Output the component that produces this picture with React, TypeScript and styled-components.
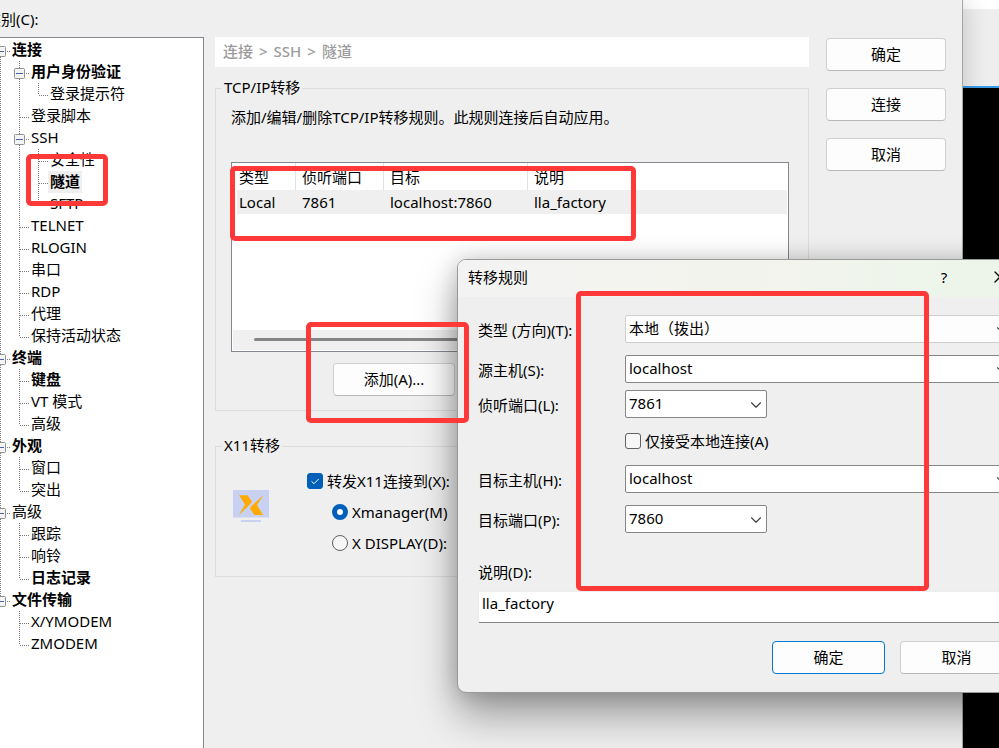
import React from "react";
import styled, { createGlobalStyle, css } from "styled-components";
import { ChevronDown, X } from "lucide-react";

const GlobalStyle = createGlobalStyle`
  * { box-sizing: border-box; }
  body {
    margin: 0;
    overflow: hidden;
    color: #000;
    font: 15px/20px "Noto Sans", "Noto Sans CJK SC", sans-serif;
  }
  button, input, select { font: inherit; color: inherit; }
`;

/* ---------- Desktop ---------- */

const Desktop = styled.div`
  position: relative;
  display: flex;
  min-height: 100vh;
  overflow: hidden;
  background: #efefef;
`;

const SettingsWindow = styled.main`
  position: relative;
  flex: 1;
  display: flex;
  padding-right: 16px;
  background: #efefef;
  border-right: 1px solid #a6a6a6;
  box-shadow: 0 0 24px rgba(0, 0, 0, 0.2);
`;

const Terminal = styled.aside`
  width: 36px;
  display: flex;
  flex-direction: column;
  background: #000;
`;

const TerminalTitle = styled.div`
  height: 9px;
  background: #fff;
`;

const TerminalTools = styled.div`
  height: 79px;
  background: #eee;
  border-bottom: 2px solid #3a9be8;
`;

/* ---------- Category tree ---------- */

const Sidebar = styled.nav`
  display: flex;
  flex-direction: column;
  width: 218px;
  margin-left: -14px;
`;

const SidebarLabel = styled.div`
  padding: 9px 0 8px;
`;

const Tree = styled.ul`
  flex: 1;
  margin: 0;
  padding: 1px 0 0 4px;
  list-style: none;
  background: #fff;
  border: 1px solid #828790;
  border-bottom: 0;
`;

const TreeRow = styled.li`
  display: flex;
  height: 22px;
`;

const TreeItem = styled.button<{ $bold: boolean; $selected: boolean }>`
  height: 22px;
  margin: 0;
  padding: 0 2px 2px;
  border: 0;
  line-height: 20px;
  white-space: nowrap;
  font-weight: ${(p) => (p.$bold ? 700 : 400)};
  background: ${(p) => (p.$selected ? "#efefef" : "transparent")};
`;

const GuideSvg = styled.svg`
  display: block;
  flex: none;
`;

type GuideKind = "none" | "line" | "tee" | "elbow" | "open" | "openFirst" | "openLast";

function Guide({ kind }: { kind: GuideKind }) {
  const open = kind.startsWith("open");
  const up = ["line", "tee", "elbow", "open", "openLast"].includes(kind);
  const down = ["line", "tee", "open", "openFirst"].includes(kind);
  const side = kind !== "none" && kind !== "line";
  return (
    <GuideSvg width="19" height="22" viewBox="0 0 19 22" aria-hidden="true">
      <g stroke="#7a7a7a" strokeDasharray="1 1">
        {up && <path d="M9.5 0V12" />}
        {down && <path d="M9.5 12V22" />}
        {side && <path d="M10 12.5H19" />}
      </g>
      {open && (
        <>
          <rect x="4.5" y="7.5" width="10" height="10" rx="1" fill="#f4f4f4" stroke="#919191" />
          <path d="M6 12.5H13" stroke="#4b63a7" />
        </>
      )}
    </GuideSvg>
  );
}

interface Node {
  text: string;
  guides: GuideKind[];
  bold?: boolean;
  selected?: boolean;
}

const nodes: Node[] = [
  { text: "连接", guides: ["openFirst"], bold: true },
  { text: "用户身份验证", guides: ["line", "open"], bold: true },
  { text: "登录提示符", guides: ["line", "line", "elbow"] },
  { text: "登录脚本", guides: ["line", "tee"] },
  { text: "SSH", guides: ["line", "open"] },
  { text: "安全性", guides: ["line", "line", "tee"] },
  { text: "隧道", guides: ["line", "line", "tee"], bold: true, selected: true },
  { text: "SFTP", guides: ["line", "line", "elbow"] },
  { text: "TELNET", guides: ["line", "tee"] },
  { text: "RLOGIN", guides: ["line", "tee"] },
  { text: "串口", guides: ["line", "tee"] },
  { text: "RDP", guides: ["line", "tee"] },
  { text: "代理", guides: ["line", "tee"] },
  { text: "保持活动状态", guides: ["line", "elbow"] },
  { text: "终端", guides: ["open"], bold: true },
  { text: "键盘", guides: ["line", "tee"], bold: true },
  { text: "VT 模式", guides: ["line", "tee"] },
  { text: "高级", guides: ["line", "elbow"] },
  { text: "外观", guides: ["open"], bold: true },
  { text: "窗口", guides: ["line", "tee"] },
  { text: "突出", guides: ["line", "elbow"] },
  { text: "高级", guides: ["open"] },
  { text: "跟踪", guides: ["line", "tee"] },
  { text: "响铃", guides: ["line", "tee"] },
  { text: "日志记录", guides: ["line", "elbow"], bold: true },
  { text: "文件传输", guides: ["openLast"], bold: true },
  { text: "X/YMODEM", guides: ["none", "tee"] },
  { text: "ZMODEM", guides: ["none", "elbow"] },
];

/* ---------- Settings content ---------- */

const Content = styled.section`
  flex: 1;
  min-width: 0;
  margin: 37px 17px 0 11px;
`;

const Breadcrumb = styled.div`
  display: flex;
  gap: 6px;
  height: 30px;
  margin-bottom: 11px;
  padding-left: 8px;
  line-height: 29px;
  font-weight: 500;
  color: #9c9c9c;
  background: #fff;
`;

const Group = styled.fieldset`
  min-width: 0;
  margin: 0 0 25px;
  padding: 0 19px 14px 15px;
  border: 1px solid #dcdcdc;
`;

const GroupTitle = styled.legend`
  margin-left: -9px;
  padding: 0 2px 2px;
  line-height: 18px;
`;

const Description = styled.p`
  margin: 9px 0 35px;
`;

const buttonBase = css`
  height: 33px;
  padding: 0 0 2px;
  background: #fdfdfd;
  border: 1px solid #d0d0d0;
  border-bottom-color: #b9b9b9;
  border-radius: 4px;
`;

const Button = styled.button<{ $primary?: boolean; $width: number }>`
  ${buttonBase}
  width: ${(p) => p.$width}px;
  ${(p) => p.$primary && "border-color: #0078d4;"}
`;

const ListBox = styled.div`
  display: flex;
  flex-direction: column;
  height: 190px;
  padding: 0 1px 1px;
  background: #fff;
  border: 1px solid #828790;
`;

const ListBody = styled.div`
  flex: 1;
  padding: 0 0 0 4px;
`;

const RuleTable = styled.table`
  width: 100%;
  table-layout: fixed;
  border-collapse: separate;
  border-spacing: 0;
  text-align: left;
`;

const Th = styled.th<{ $width?: number }>`
  width: ${(p) => (p.$width ? `${p.$width}px` : "auto")};
  height: 27px;
  padding: 0 0 0 6px;
  font-weight: 400;
  border-right: ${(p) => (p.$width ? "1px solid #e2e2e2" : "0")};
  &:first-child { padding-left: 2px; }
`;

const Td = styled.td`
  height: 24px;
  padding: 0 0 0 6px;
  background: #efefef;
  &:first-child { padding-left: 2px; }
`;

const ScrollTrack = styled.div`
  display: flex;
  align-items: center;
  height: 20px;
  padding: 0 60px 2px 21px;
  background: #f0f0f0;
`;

const ScrollThumb = styled.div`
  flex: 1;
  height: 3px;
  border-radius: 2px;
  background: #858585;
`;

const ListActions = styled.div`
  margin: 11px 0 0 102px;
`;

const ForwardLayout = styled.div`
  display: flex;
  padding: 15px 0 9px 2px;
`;

const ForwardIcon = styled.svg`
  flex: none;
  margin: 19px 38px 0 0;
`;

const Options = styled.div`
  display: flex;
  flex-direction: column;
  gap: 11px;
`;

const Option = styled.label<{ $indent?: boolean }>`
  display: flex;
  align-items: center;
  gap: 4px;
  margin-left: ${(p) => (p.$indent ? 25 : 0)}px;
`;

const CheckWrap = styled.span`
  position: relative;
  display: flex;
`;

const CheckMark = styled.svg`
  position: absolute;
  inset: 0;
  pointer-events: none;
`;

const CheckBox = styled.input`
  appearance: none;
  width: 16px;
  height: 16px;
  margin: 0;
  background: #f6f6f6;
  border: 1px solid #606060;
  border-radius: 3px;
  &:checked {
    background: #005fb8;
    border-color: #005fb8;
  }
`;

const RadioButton = styled.input`
  appearance: none;
  width: 16px;
  height: 16px;
  margin: 0;
  background: #f6f6f6;
  border: 1px solid #606060;
  border-radius: 50%;
  &:checked {
    background: #fff;
    border: 5px solid #005fb8;
  }
`;

const SideActions = styled.div`
  display: flex;
  flex-direction: column;
  gap: 17px;
  padding-top: 38px;
`;

/* ---------- Rule dialog ---------- */

const Dialog = styled.div`
  position: absolute;
  top: 259px;
  left: 457px;
  right: -35px;
  overflow: hidden;
  background: #efefef;
  border: 1px solid #999;
  border-radius: 9px;
  box-shadow: 0 22px 40px rgba(0, 0, 0, 0.36), 0 0 22px rgba(0, 0, 0, 0.18);
`;

const TitleBar = styled.header`
  display: flex;
  align-items: center;
  height: 37px;
  padding: 0 5px 3px 10px;
  background: linear-gradient(90deg, #f3f3f3, #f3f3ed 50%, #edf5ea 85%);
`;

const DialogTitle = styled.h1`
  flex: 1;
  margin: 0;
  font: inherit;
`;

const CaptionButton = styled.button`
  display: flex;
  align-items: center;
  justify-content: center;
  width: 56px;
  height: 34px;
  padding: 0;
  border: 0;
  background: transparent;
`;

const Form = styled.form`
  padding: 18px 20px;
`;

const Row = styled.div<{ $gap?: number }>`
  display: flex;
  margin-top: ${(p) => p.$gap ?? 0}px;
`;

const FieldLabel = styled.label`
  flex: none;
  width: 147px;
  padding-top: 5px;
`;

const SelectWrap = styled.div<{ $compact?: boolean }>`
  position: relative;
  ${(p) => (p.$compact ? "width: 142px;" : "flex: 1;")}
  svg {
    position: absolute;
    right: 2px;
    top: 6px;
    pointer-events: none;
  }
`;

const Select = styled.select<{ $flat?: boolean }>`
  appearance: none;
  display: block;
  width: 100%;
  height: 28px;
  padding: 0 24px 2px 3px;
  background: ${(p) => (p.$flat ? "#fdfdfd" : "#fff")};
  border: 1px solid ${(p) => (p.$flat ? "#cfcfcf" : "#868686")};
  border-radius: 2px;
`;

const OptionRow = styled(Row)`
  padding-left: 147px;
`;

const NoteLabel = styled.label`
  display: block;
  margin: 29px 0 9px;
`;

const NoteInput = styled.input`
  display: block;
  width: 100%;
  height: 32px;
  padding: 0 3px 8px;
  background: #fff;
  border: 1px solid #ededed;
  border-bottom-color: #808080;
  border-radius: 2px;
`;

const FormActions = styled.div`
  display: flex;
  justify-content: flex-end;
  gap: 15px;
  margin-top: 18px;
`;

const Highlight = styled.div<{ $x: number; $y: number; $w: number; $h: number }>`
  position: absolute;
  left: ${(p) => p.$x}px;
  top: ${(p) => p.$y}px;
  width: ${(p) => p.$w}px;
  height: ${(p) => p.$h}px;
  border: 5px solid #ff3838;
  border-radius: 5px;
  pointer-events: none;
`;

interface ComboProps {
  id: string;
  label: string;
  value: string;
  gap?: number;
  compact?: boolean;
  flat?: boolean;
}

function ComboRow({ id, label, value, gap, compact, flat }: ComboProps) {
  return (
    <Row $gap={gap}>
      <FieldLabel htmlFor={id}>{label}</FieldLabel>
      <SelectWrap $compact={compact}>
        <Select id={id} $flat={flat} defaultValue={value}>
          <option value={value}>{value}</option>
        </Select>
        <ChevronDown size={18} strokeWidth={1.5} color="#404040" />
      </SelectWrap>
    </Row>
  );
}

export default function App() {
  return (
    <Desktop>
      <GlobalStyle />
      <SettingsWindow>
        <Sidebar>
          <SidebarLabel>类别(C):</SidebarLabel>
          <Tree>
            {nodes.map((node, i) => (
              <TreeRow key={i}>
                {node.guides.map((kind, j) => (
                  <Guide key={j} kind={kind} />
                ))}
                <TreeItem type="button" $bold={!!node.bold} $selected={!!node.selected}>
                  {node.text}
                </TreeItem>
              </TreeRow>
            ))}
          </Tree>
        </Sidebar>

        <Content>
          <Breadcrumb>
            <span>连接</span>
            <span>&gt;</span>
            <span>SSH</span>
            <span>&gt;</span>
            <span>隧道</span>
          </Breadcrumb>

          <Group>
            <GroupTitle>TCP/IP转移</GroupTitle>
            <Description>添加/编辑/删除TCP/IP转移规则。此规则连接后自动应用。</Description>
            <ListBox>
              <ListBody>
                <RuleTable>
                  <thead>
                    <tr>
                      <Th $width={59}>类型</Th>
                      <Th $width={88}>侦听端口</Th>
                      <Th $width={144}>目标</Th>
                      <Th>说明</Th>
                    </tr>
                  </thead>
                  <tbody>
                    <tr>
                      <Td>Local</Td>
                      <Td>7861</Td>
                      <Td>localhost:7860</Td>
                      <Td>lla_factory</Td>
                    </tr>
                  </tbody>
                </RuleTable>
              </ListBody>
              <ScrollTrack>
                <ScrollThumb />
              </ScrollTrack>
            </ListBox>
            <ListActions>
              <Button type="button" $width={122}>添加(A)...</Button>
            </ListActions>
          </Group>

          <Group>
            <GroupTitle>X11转移</GroupTitle>
            <ForwardLayout>
              <ForwardIcon width="36" height="33" viewBox="0 0 36 33" aria-hidden="true">
                <path d="M0 0H36V27.5H0ZM8 30H28V32H8Z" fill="#c8d1f1" />
                <path
                  d="M6 5.3H14.5L19 11.5L17.5 13.8L5.7 25.3L12 14.5ZM30.5 5L24 15L30 25H21.5L17 18.5L18.5 16Z"
                  fill="#ffaa00"
                />
              </ForwardIcon>
              <Options>
                <Option>
                  <CheckWrap>
                    <CheckBox type="checkbox" defaultChecked />
                    <CheckMark width="16" height="16" viewBox="0 0 16 16" aria-hidden="true">
                      <path d="M4.5 8.3L7 10.7L11.7 6" fill="none" stroke="#fff" />
                    </CheckMark>
                  </CheckWrap>
                  转发X11连接到(X):
                </Option>
                <Option $indent>
                  <RadioButton type="radio" name="display" defaultChecked />
                  Xmanager(M)
                </Option>
                <Option $indent>
                  <RadioButton type="radio" name="display" />X DISPLAY(D):
                </Option>
              </Options>
            </ForwardLayout>
          </Group>
        </Content>

        <SideActions>
          <Button type="button" $width={120}>确定</Button>
          <Button type="button" $width={120}>连接</Button>
          <Button type="button" $width={120}>取消</Button>
        </SideActions>
      </SettingsWindow>

      <Terminal>
        <TerminalTitle />
        <TerminalTools />
      </Terminal>

      <Dialog role="dialog" aria-labelledby="rule-title">
        <TitleBar>
          <DialogTitle id="rule-title">转移规则</DialogTitle>
          <CaptionButton type="button">?</CaptionButton>
          <CaptionButton type="button" aria-label="关闭">
            <X size={20} strokeWidth={1.5} />
          </CaptionButton>
        </TitleBar>
        <Form>
          <ComboRow id="type" label="类型 (方向)(T):" value="本地（拨出）" flat />
          <ComboRow id="source-host" label="源主机(S):" value="localhost" gap={12} />
          <ComboRow id="listen-port" label="侦听端口(L):" value="7861" gap={7} compact />
          <OptionRow $gap={13}>
            <Option>
              <CheckBox type="checkbox" />
              仅接受本地连接(A)
            </Option>
          </OptionRow>
          <ComboRow id="target-host" label="目标主机(H):" value="localhost" gap={14} />
          <ComboRow id="target-port" label="目标端口(P):" value="7860" gap={12} compact />
          <NoteLabel htmlFor="note">说明(D):</NoteLabel>
          <NoteInput id="note" type="text" defaultValue="lla_factory" />
          <FormActions>
            <Button type="button" $width={113} $primary>确定</Button>
            <Button type="button" $width={113}>取消</Button>
          </FormActions>
        </Form>
      </Dialog>

      <Highlight $x={26} $y={154} $w={82} $h={52} />
      <Highlight $x={230} $y={166} $w={406} $h={75} />
      <Highlight $x={306} $y={322} $w={163} $h={101} />
      <Highlight $x={576} $y={291} $w={353} $h={300} />
    </Desktop>
  );
}
